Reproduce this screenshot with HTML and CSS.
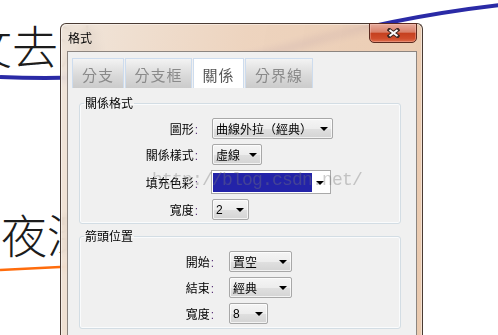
FILE: index.html
```html
<!DOCTYPE html>
<html lang="zh-Hant">
<head>
    <meta charset="UTF-8">
    <title>格式</title>
    <link rel="stylesheet" href="styles.css">
</head>
<body>
    <!-- drawing behind the dialog -->
    <svg class="canvas" width="498" height="335" viewBox="0 0 498 335">
        <text class="big" x="-34" y="64">文去法</text>
        <text class="big" x="1" y="253">夜深</text>
        <path class="edge-blue" d="M0,77 C120,82 230,66 300,45 S440,12 500,5"/>
        <path class="edge-orange" d="M0,270 L140,263"/>
    </svg>

    <div class="dialog">
        <div class="titlebar">
            <span class="title">格式</span>
            <button class="close-btn">
                <svg width="13" height="10" viewBox="0 0 13 10">
                    <path d="M2.5 2 L10.5 8 M10.5 2 L2.5 8" stroke="#3b2723" stroke-width="4" stroke-linecap="square"/>
                    <path d="M2.5 2 L10.5 8 M10.5 2 L2.5 8" stroke="#fff" stroke-width="2"/>
                </svg>
            </button>
        </div>

        <div class="client">
            <div class="tabs">
                <div class="tab tab-a">分支</div>
                <div class="tab tab-b">分支框</div>
                <div class="tab tab-c active">關係</div>
                <div class="tab tab-d">分界線</div>
            </div>

            <!-- 關係格式 -->
            <fieldset class="group">
                <legend>關係格式</legend>
                <div class="form form-relation">
                    <label>圖形<span class="colon">:</span></label>
                    <div class="combo combo-wide"><span>曲線外拉（經典）</span><i class="arrow"></i></div>

                    <label>關係樣式<span class="colon">:</span></label>
                    <div class="combo combo-short"><span>虛線</span><i class="arrow"></i></div>

                    <label>填充色彩<span class="colon">:</span></label>
                    <div class="color-pick"><span class="swatch"></span><i class="arrow"></i></div>

                    <label>寬度<span class="colon">:</span></label>
                    <div class="combo combo-tiny"><span>2</span><i class="arrow"></i></div>
                </div>
            </fieldset>

            <!-- 箭頭位置 -->
            <fieldset class="group group-arrow">
                <legend>箭頭位置</legend>
                <div class="form form-arrow">
                    <label>開始<span class="colon">:</span></label>
                    <div class="combo combo-mid"><span>置空</span><i class="arrow"></i></div>

                    <label>結束<span class="colon">:</span></label>
                    <div class="combo combo-mid"><span>經典</span><i class="arrow"></i></div>

                    <label>寬度<span class="colon">:</span></label>
                    <div class="combo combo-small"><span>8</span><i class="arrow"></i></div>
                </div>
            </fieldset>
        </div>
    </div>

    <div class="watermark">http://blog.csdn.net/</div>
</body>
</html>
```

FILE: styles.css
```css
body {
    margin: 0;
    width: 498px;
    height: 335px;
    overflow: hidden;
    position: relative;
    background: #fff;
    color: #000;
    font-family: "Liberation Sans", "Noto Sans CJK TC", sans-serif;
    font-size: 12px;
}

.canvas {
    position: absolute;
    left: 0;
    top: 0;
}

.big {
    font-family: "Noto Sans CJK TC", sans-serif;
    font-size: 46px;
    font-weight: 300;
    fill: #1c1c1c;
}

.edge-blue {
    fill: none;
    stroke: #2a2aa6;
    stroke-width: 4;
}

.edge-orange {
    fill: none;
    stroke: #ff6c0c;
    stroke-width: 2.5;
}

/* window */
.dialog {
    position: absolute;
    left: 60px;
    top: 23px;
    width: 363px;
    height: 312px;
    box-sizing: border-box;
    display: flex;
    flex-direction: column;
    padding: 0 5px 0 6px;
    border: 1px solid #4a3b33;
    border-bottom: none;
    border-radius: 6px 6px 0 0;
    background: linear-gradient(100deg, rgba(238, 226, 214, 0.88) 0%, rgba(235, 206, 182, 0.88) 45%, rgba(232, 196, 166, 0.9) 100%);
    backdrop-filter: blur(4px);
    box-shadow: inset 1px 1px 0 rgba(255, 255, 255, 0.45), inset -1px 0 0 rgba(255, 255, 255, 0.45);
}

.titlebar {
    height: 27px;
    line-height: 27px;
    padding-left: 1px;
    flex: none;
}

.title {
    font-family: "Noto Sans CJK TC", sans-serif;
    font-size: 12px;
}

.close-btn {
    position: absolute;
    top: -1px;
    right: 5px;
    width: 48px;
    height: 20px;
    padding: 0;
    border: 1px solid #5b2a1f;
    border-radius: 0 0 5px 5px;
    background: linear-gradient(#e6ab9c 0%, #d9806a 45%, #c5401f 52%, #cf4c2b 80%, #de6d4c 100%);
    box-shadow: inset 0 0 0 1px rgba(255, 210, 200, 0.35);
    display: flex;
    align-items: center;
    justify-content: center;
}

.client {
    flex: 1;
    border: 1px solid #8c8580;
    border-bottom: none;
    background: #f0f0f0;
    overflow: hidden;
}

/* tabs */
.tabs {
    display: flex;
    gap: 1px;
    margin: 6px 0 0 4px;
    height: 30px;
}

.tab {
    box-sizing: border-box;
    border: 1px solid #cddcee;
    border-bottom: none;
    background: linear-gradient(#f3f3f3, #dadada 55%, #cbcbcb);
    color: #8a8a8a;
    font-family: "Noto Sans CJK TC", sans-serif;
    font-size: 15px;
    letter-spacing: 1px;
    text-align: center;
    line-height: 32px;
}

.tab.active {
    background: #fff;
    color: #555;
}

.tab-a { width: 52px; }
.tab-b { width: 67px; }
.tab-c { width: 51px; }
.tab-d { width: 68px; }

/* group boxes */
.group {
    margin: 7px 15px 0 11px;
    padding: 0 0 3px;
    border: 1px solid #d3dde4;
    border-radius: 3px;
    box-shadow: inset 0 0 0 1px #fafbfc;
}

.group-arrow {
    margin-top: 4px;
    padding-bottom: 4px;
}

.group legend {
    margin-left: 4px;
    padding: 0 1px;
    line-height: 16px;
    font-family: "Noto Sans CJK TC", sans-serif;
    font-size: 12px;
}

.form {
    display: grid;
    row-gap: 5px;
    column-gap: 11px;
    align-items: center;
    justify-items: start;
}

.form-relation {
    grid-template-columns: 121px auto;
    margin-top: 7px;
}

.form-arrow {
    grid-template-columns: 137px auto;
    column-gap: 12px;
    margin-top: 7px;
}

.form label {
    justify-self: end;
    padding-right: 3px;
    font-family: "Noto Sans CJK TC", sans-serif;
}

.colon {
    font-family: "Liberation Sans", sans-serif;
    color: #5b3478;
    margin-left: 1px;
}

/* combo boxes */
.combo {
    box-sizing: border-box;
    height: 21px;
    display: flex;
    align-items: center;
    justify-content: space-between;
    padding: 0 4px 0 3px;
    border: 1px solid #a8a8a8;
    border-radius: 2px;
    background: linear-gradient(#f5f5f5 0%, #ededed 50%, #e0e0e0 51%, #d4d4d4 100%);
    box-shadow: inset 0 0 0 1px rgba(255, 255, 255, 0.7);
    font-size: 12px;
}

.combo span {
    font-family: "Liberation Sans", "Noto Sans CJK TC", sans-serif;
}

.combo-wide { width: 121px; }
.combo-short { width: 50px; }
.combo-tiny { width: 37px; }
.combo-mid { width: 63px; }
.combo-small { width: 39px; }

.arrow {
    width: 0;
    height: 0;
    border-left: 4px solid transparent;
    border-right: 4px solid transparent;
    border-top: 4px solid #000;
    margin-top: 1px;
}

.color-pick {
    box-sizing: border-box;
    width: 120px;
    height: 24px;
    margin-left: -1px;
    padding: 1px 6px 1px 1px;
    display: flex;
    align-items: center;
    justify-content: space-between;
    border: 1px solid #a9a9a9;
    background: #fff;
}

.swatch {
    width: 99px;
    height: 19px;
    background: #2323a8;
}

.watermark {
    position: absolute;
    left: 152px;
    top: 171px;
    font-family: "Liberation Mono", monospace;
    font-size: 18px;
    line-height: 18px;
    letter-spacing: -0.8px;
    color: rgba(120, 120, 120, 0.38);
    white-space: nowrap;
    pointer-events: none;
}
```
